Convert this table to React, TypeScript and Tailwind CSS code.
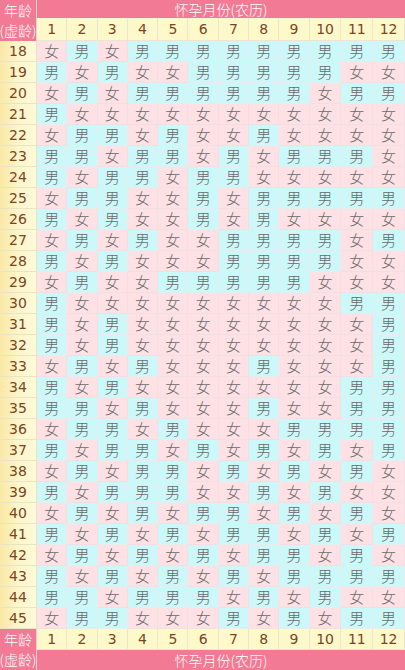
const rows: [number, string][] = [
  [18, "女男女男男男男男男男男男"],
  [19, "男女男女女男男男男男女女"],
  [20, "女男女男男男男男男女男男"],
  [21, "男女女女女女女女女女女女"],
  [22, "女男男女男女女男女女女女"],
  [23, "男男女男男女男女男男男女"],
  [24, "男女男男女男男女女女女女"],
  [25, "女男男女女男女男男男男男"],
  [26, "男女男女女男女男女女女女"],
  [27, "女男女男女女男男男男女男"],
  [28, "男女男女女女男男男男女女"],
  [29, "女男女女男男男男男女女女"],
  [30, "男女女女女女女女女女男男"],
  [31, "男女男女女女女女女女女男"],
  [32, "男女男女女女女女女女女男"],
  [33, "女男女男女女女男女女女男"],
  [34, "男女男女女女女女女女男男"],
  [35, "男男女男女女女男女女男男"],
  [36, "女男男女男女女女男男男男"],
  [37, "男女男男女男女男女男女男"],
  [38, "女男女男男女男女男女男女"],
  [39, "男女男男男女女男女男女女"],
  [40, "女男女男女男男女男女男女"],
  [41, "男女男女男女男男女男女男"],
  [42, "女男女男女男女男男女男女"],
  [43, "男女男女男女男女男男男男"],
  [44, "男男女男男男女男女男女女"],
  [45, "女男男女女女男女男女男男"],
];

const months = [1, 2, 3, 4, 5, 6, 7, 8, 9, 10, 11, 12];

const num = { fontFamily: '"DejaVu Sans", "Liberation Sans", sans-serif' };

function AgeCorner() {
  return (
    <div className="row-span-2 flex flex-col items-center justify-between border-r border-white/60 bg-[#f27a94] py-[1px] text-[14px] leading-[19px] font-light text-white">
      <span>年龄</span>
      <span className="-mx-1 whitespace-nowrap">(虚龄)</span>
    </div>
  );
}

function MonthRow() {
  return (
    <>
      {months.map((m) => (
        <div
          key={m}
          style={num}
          className="flex items-center justify-center border-r border-b border-[#ebe6cf] bg-[#fdf9cb] text-[14px] text-[#7e4422]"
        >
          {m}
        </div>
      ))}
    </>
  );
}

function Title() {
  return (
    <div className="col-span-12 flex items-center justify-center bg-[#f27a94] text-[14px] font-light text-white">
      怀孕月份(农历)
    </div>
  );
}

export default function App() {
  return (
    <div
      className="grid h-[670px] w-[405px] grid-cols-[37px_repeat(9,30.3px)_repeat(3,1fr)] grid-rows-[18px_23px_repeat(28,21px)_21px_20px] overflow-hidden bg-white"
      style={{ fontFamily: '"Noto Sans CJK SC", "DejaVu Sans", sans-serif' }}
    >
      <AgeCorner />
      <Title />
      <MonthRow />

      {rows.map(([age, cells]) => (
        <div key={age} className="contents">
          <div
            style={num}
            className="flex items-center justify-center border-r border-b border-[#ebe4c4] bg-gradient-to-r from-[#f9e7a4] via-[#fdf6cc] to-[#fefad8] text-[14px] text-[#7e4422]"
          >
            {age}
          </div>
          {cells.split("").map((c, i) => (
            <div
              key={i}
              className={
                c === "男"
                  ? "flex items-center justify-center border-r border-b border-[#e4eeee] bg-[#cdf8f9] text-[15px] font-light text-[#6a6a6a]"
                  : "flex items-center justify-center border-r border-b border-[#f2dfe2] bg-[#fde1e5] text-[15px] font-light text-[#6a6a6a]"
              }
            >
              {c}
            </div>
          ))}
        </div>
      ))}

      <AgeCorner />
      <MonthRow />
      <Title />
    </div>
  );
}
